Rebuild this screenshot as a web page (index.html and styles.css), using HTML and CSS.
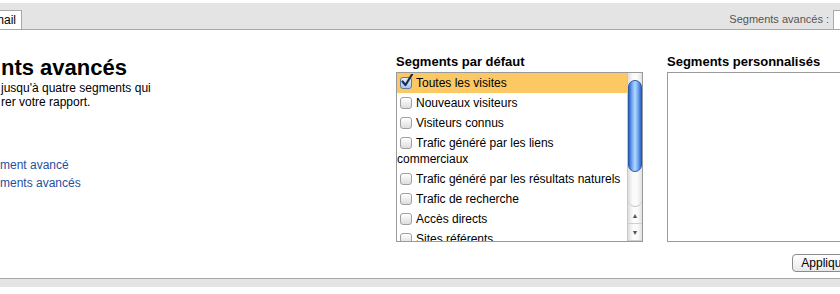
FILE: index.html
```html
<!DOCTYPE html>
<html lang="fr">
<head>
  <meta charset="UTF-8">
  <meta name="viewport" content="width=device-width, initial-scale=1.0">
  <title>Segments avancés</title>
  <link rel="stylesheet" href="styles.css">
</head>
<body>
  <div class="page">
    <div class="topbar">
      <div class="tab tabEmail">Email</div>
      <div class="topRight">
        <span class="topLabel">Segments avancés :</span>
        <div class="tab tabSegments"></div>
      </div>
    </div>

    <div class="main">
      <div class="intro">
        <h1 class="title">nts avancés</h1>
        <p class="desc">jusqu'à quatre segments qui<br>rer votre rapport.</p>
        <div class="links">
          <a href="#" class="link">ment avancé</a>
          <a href="#" class="link">ments avancés</a>
        </div>
      </div>

      <div class="defaults">
        <div class="colTitle">Segments par défaut</div>
        <div class="listbox">
          <div class="items">
            <div class="item selected"><span class="check checked"><svg width="14" height="14" viewBox="0 0 14 14"><path d="M2.5 7.5 L5.5 11 L12 0.5" fill="none" stroke="#1b2b55" stroke-width="2.2" stroke-linecap="round" stroke-linejoin="round"/></svg></span>Toutes les visites</div>
            <div class="item"><span class="check"></span>Nouveaux visiteurs</div>
            <div class="item"><span class="check"></span>Visiteurs connus</div>
            <div class="item"><span class="check"></span>Trafic généré par les liens commerciaux</div>
            <div class="item"><span class="check"></span>Trafic généré par les résultats naturels</div>
            <div class="item"><span class="check"></span>Trafic de recherche</div>
            <div class="item"><span class="check"></span>Accès directs</div>
            <div class="item"><span class="check"></span>Sites référents</div>
          </div>
          <div class="scrollbar">
            <div class="track">
              <div class="thumb"></div>
            </div>
            <div class="arrow">&#9650;</div>
            <div class="arrow">&#9660;</div>
          </div>
        </div>
      </div>

      <div class="custom">
        <div class="colTitle">Segments personnalisés</div>
        <div class="customBox"></div>
      </div>
    </div>

    <div class="actions">
      <button class="apply">Appliquer</button>
    </div>

    <div class="footer"></div>
  </div>
</body>
</html>
```

FILE: styles.css
```css
body {
  margin: 0;
  overflow: hidden;
  background: #fff;
  font-family: "Liberation Sans", Arial, sans-serif;
  color: #000;
}

.page {
  width: 840px;
}

/* barre du haut */
.topbar {
  margin-top: 3px;
  height: 26px;
  background: #e4e4e4;
  border-bottom: 1px solid #a8a8a8;
  display: flex;
  align-items: flex-end;
  justify-content: space-between;
}

.tab {
  height: 18px;
  background: #fff;
  border: 1px solid #a8a8a8;
  border-bottom: none;
  font-size: 12px;
  line-height: 18px;
  color: #000;
}

.tabEmail {
  margin-left: -21px;
  padding: 0 5px 0 6px;
}

.topRight {
  display: flex;
  align-items: flex-end;
}

.topLabel {
  font-size: 11px;
  line-height: 18px;
  color: #555;
  margin-right: 4px;
  margin-bottom: 1px;
}

.tabSegments {
  width: 6px;
  border-right: none;
}

/* contenu */
.main {
  display: flex;
  height: 212px;
}

.intro {
  width: 396px;
  padding-top: 25px;
}

.title {
  margin: 0 0 0 1px;
  font-size: 22px;
  line-height: 26px;
  font-weight: bold;
}

.desc {
  margin: 0 0 0 1px;
  font-size: 12px;
  line-height: 14px;
}

.links {
  margin-top: 47px;
}

.link {
  display: block;
  font-size: 12px;
  line-height: 18px;
  color: #1f4f9e;
  text-decoration: none;
}

.defaults {
  width: 247px;
  margin-right: 24px;
  padding-top: 24px;
}

.custom {
  flex: 1;
  margin-right: -20px;
  padding-top: 24px;
}

.colTitle {
  font-size: 13px;
  line-height: 16px;
  font-weight: bold;
  margin-bottom: 2px;
}

.listbox {
  height: 168px;
  border: 1px solid #9a9a9a;
  display: flex;
  overflow: hidden;
}

.items {
  width: 230px;
  font-size: 12px;
  line-height: 16px;
}

.item {
  padding: 2px 0;
}

.selected {
  background: #fcc864;
}

.check {
  display: inline-block;
  box-sizing: border-box;
  width: 12px;
  height: 12px;
  margin: 0 4px 0 3px;
  vertical-align: -2px;
  border: 1px solid #a0a0a0;
  border-radius: 3px;
  background: linear-gradient(#ffffff, #dcdcdc);
}

.checked {
  position: relative;
  border-color: #5a78a8;
  background: linear-gradient(#e6f0fc, #a9c8ee);
}

.checked svg {
  position: absolute;
  left: -1px;
  top: -4px;
}

/* barre de défilement */
.scrollbar {
  width: 15px;
  display: flex;
  flex-direction: column;
  border-left: 1px solid #c8c8c8;
  box-sizing: border-box;
  background: linear-gradient(to right, #dedede, #fbfbfb 35%, #fbfbfb 65%, #e2e2e2);
}

.track {
  height: 134px;
  border-bottom: 1px solid #c4c4c4;
  border-radius: 0 0 7px 7px;
}

.thumb {
  height: 90px;
  margin: 7px 0 0 0;
  border: 1px solid #2a57a6;
  border-radius: 7px;
  background: linear-gradient(to right, #2c63cc, #6fa8f2 25%, #b5d8fc 50%, #6fa8f2 75%, #2c63cc);
}

.arrow {
  height: 16px;
  font-size: 7px;
  line-height: 18px;
  text-align: center;
  color: #555;
  border-bottom: 1px solid #d0d0d0;
}

.customBox {
  height: 168px;
  border: 1px solid #9a9a9a;
}

/* bouton */
.actions {
  display: flex;
  justify-content: flex-end;
  margin-top: 12px;
}

.apply {
  margin-right: -21px;
  height: 18px;
  padding: 0 8px;
  font-family: "Liberation Sans", Arial, sans-serif;
  font-size: 12px;
  line-height: 16px;
  color: #000;
  border: 1px solid #8c8c8c;
  border-radius: 4px;
  background: linear-gradient(#ffffff, #e8e8e8);
}

.footer {
  margin-top: 6px;
  height: 8px;
  background: #e4e4e4;
  border-top: 1px solid #a8a8a8;
}
```
